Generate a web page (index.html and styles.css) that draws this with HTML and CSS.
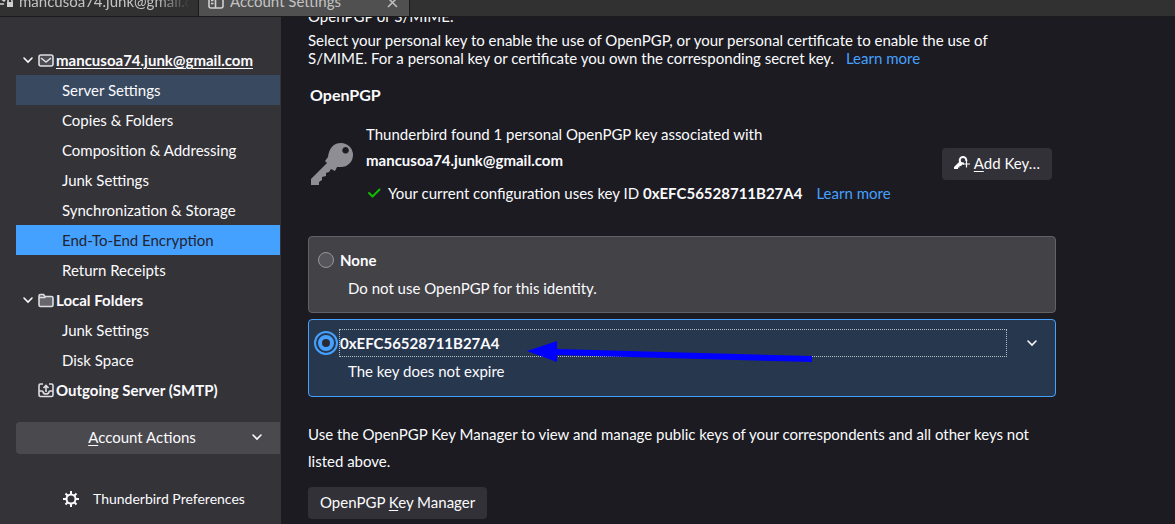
FILE: index.html
```html
<!DOCTYPE html>
<html lang="en">
<head>
<meta charset="utf-8">
<title>Account Settings</title>
<link rel="stylesheet" href="styles.css">
</head>
<body>
<header class="tabs">
  <div class="tab tab-mail">
    <svg class="tab-icon" width="16" height="16" viewBox="0 0 16 16" fill="none" stroke="#d0d0d0" stroke-width="1.6"><path d="M0 11h4M0 5l4 3 5-6M10.500 0v5"/><path d="M8 10V8a2 2 0 0 1 4 0v2"/><path d="M7 9h6v5H7z" fill="#d0d0d0" stroke="none"/></svg>
    <span class="tab-title faded">mancusoa74.junk@gmail.com</span>
  </div>
  <div class="tab tab-active">
    <svg class="tab-icon" width="16" height="16" viewBox="0 0 16 16" fill="none" stroke="#d0d0d0" stroke-width="1.6"><rect x="1" y="1" width="14" height="14" rx="2"/><path d="M7.500 1v14M3 7.500h2.500M3 10.500h2.500" /></svg>
    <span class="tab-title">Account Settings</span>
    <button class="tab-close" aria-label="Close tab"><svg width="12" height="12" viewBox="0 0 12 12" stroke="#bdbdbd" stroke-width="1.6"><path d="M1 1l9 9M10 1l-9 9"/></svg></button>
  </div>
</header>
<div class="layout">
  <nav class="sidebar">
    <ul class="tree">
      <li><a class="row account" href="#"><svg class="twisty" width="12" height="12" viewBox="0 0 12 12"><path d="M2 4l4 4 4-4"/></svg><svg class="icon" width="16" height="16" viewBox="0 0 16 16"><rect x="1" y="3" width="14" height="11" rx="2" fill="#4d4c53"/><path d="M3 6l5 4 5-4"/></svg><span class="underlined">mancusoa74.junk@gmail.com</span></a></li>
      <li><a class="row child hovered" href="#">Server Settings</a></li>
      <li><a class="row child" href="#">Copies &amp; Folders</a></li>
      <li><a class="row child" href="#">Composition &amp; Addressing</a></li>
      <li><a class="row child" href="#">Junk Settings</a></li>
      <li><a class="row child" href="#">Synchronization &amp; Storage</a></li>
      <li><a class="row child selected" href="#">End-To-End Encryption</a></li>
      <li><a class="row child" href="#">Return Receipts</a></li>
      <li><a class="row account" href="#"><svg class="twisty" width="12" height="12" viewBox="0 0 12 12"><path d="M2 4l4 4 4-4"/></svg><svg class="icon" width="16" height="16" viewBox="0 0 16 16"><path d="M1 5V4q0-1.500 1.500-1.500h3L7 4.500h6.500Q15 4.500 15 6v7Q15 14.500 13.500 14.500h-11Q1 14.500 1 13zM1 5.500h6.500" fill="#67666c"/></svg><span>Local Folders</span></a></li>
      <li><a class="row child" href="#">Junk Settings</a></li>
      <li><a class="row child" href="#">Disk Space</a></li>
      <li><a class="row account" href="#"><span class="twisty"></span><svg class="icon" width="16" height="16" viewBox="0 0 16 16"><path d="M5 2H2.500Q1 2 1 3.500v9.500Q1 14.500 2.500 14.500h11Q15 14.500 15 13V3.500Q15 2 13.500 2H11M8 10V4M5.500 6L8 3.500 10.500 6M1.500 9h2.500q1 0 1 1 .5 2 3 2t3-2q0-1 1-1h2.500"/></svg><span>Outgoing Server (SMTP)</span></a></li>
    </ul>
    <button class="actions"><span class="actions-label"><u>A</u>ccount Actions</span><svg class="twisty" width="12" height="12" viewBox="0 0 12 12"><path d="M2 4l4 4 4-4"/></svg></button>
    <a class="prefs" href="#"><svg width="16" height="16" viewBox="0 0 16 16" fill="none" stroke="#fbfbfe"><circle cx="8" cy="8" r="4.500" stroke-width="2"/><path stroke-width="2" d="M8 0v3M8 13v3M0 8h3M13 8h3M2.500 2.500l2 2M11.500 11.500l2 2M13.500 2.500l-2 2M4.500 11.500l-2 2"/></svg><span>Thunderbird Preferences</span></a>
  </nav>
  <main class="content">
    <p class="intro clipped">OpenPGP or S/MIME.</p>
    <p class="intro">Select your personal key to enable the use of OpenPGP, or your personal certificate to enable the use of<br>S/MIME. For a personal key or certificate you own the corresponding secret key. <a class="link" href="#">Learn more</a></p>
    <h2 class="heading">OpenPGP</h2>
    <section class="status">
      <svg class="key" width="44" height="44" viewBox="0 0 44 44"><path fill="#8f8e94" fill-rule="evenodd" d="M31 1a12 12 0 0 1 0 24q-2 0-4 0l-2 4-4-2-2 3-3 1v3l-4 1v3l-3 2v3H1v-6l16-16-2-2 3-4C19 7 23 1 31 1zM35.500 5a3.300 3.300 0 1 0 .1 0z"/></svg>
      <div class="status-text">
        <p class="found">Thunderbird found 1 personal OpenPGP key associated with<br><strong>mancusoa74.junk@gmail.com</strong></p>
        <p class="current"><svg width="16" height="16" viewBox="0 0 16 16" fill="none" stroke="#12bc00" stroke-width="2" stroke-linecap="round" stroke-linejoin="round"><path d="M3 8l3.500 3.500L13.500 4.500"/></svg><span>Your current configuration uses key ID <strong>0xEFC56528711B27A4</strong></span><a class="link" href="#">Learn more</a></p>
      </div>
      <button class="button add"><svg width="16" height="16" viewBox="0 0 16 16" fill="none" stroke="#fbfbfe"><path stroke-width="2" d="M10 8.500H9a3.300 3.300 0 1 1 3.300-3.300V6"/><path fill="#fbfbfe" stroke="none" d="M5.500 6.500L8.500 9.500 7 11H5.500v1.500H4V14H0v-2z"/><path stroke-width="1.200" d="M12.500 5.500v7M9 9h7"/></svg><span><u>A</u>dd Key…</span></button>
    </section>
    <div class="cards">
      <div class="card">
        <div class="option"><input class="radio" type="radio" name="key" id="none"><label class="option-label" for="none">None</label></div>
        <p class="detail">Do not use OpenPGP for this identity.</p>
      </div>
      <div class="card card-selected">
        <div class="option"><input class="radio" type="radio" name="key" id="key1" checked><label class="option-label focused" for="key1">0xEFC56528711B27A4</label><button class="expand" aria-label="Show key details"><svg class="twisty" width="12" height="12" viewBox="0 0 12 12"><path d="M2 4l4 4 4-4"/></svg></button></div>
        <p class="detail">The key does not expire</p>
        <svg class="arrow" width="286" height="24" viewBox="0 0 286 24" fill="#0000ff"><path d="M0 11L30 1v8l255 7v6L30 15v7z"/></svg>
      </div>
    </div>
    <p class="manage">Use the OpenPGP Key Manager to view and manage public keys of your correspondents and all other keys not listed above.</p>
    <button class="button"><span>OpenPGP <u>K</u>ey Manager</span></button>
  </main>
</div>
</body>
</html>
```
FILE: styles.css
```css
* { box-sizing: border-box; }
body {
  margin: 0;
  height: 100vh;
  display: flex;
  flex-direction: column;
  overflow: hidden;
  background: #1c1b22;
  color: #fbfbfe;
  font: 15px/18px Lato, "Open Sans", sans-serif;
}
p, h2, ul { margin: 0; padding: 0; }
ul { list-style: none; }
a { color: inherit; text-decoration: none; }
button { font: inherit; color: inherit; border: 0; padding: 0; background: none; }
svg { flex: none; }
u { text-underline-offset: 2px; }

.tabs {
  display: flex;
  align-items: flex-end;
  flex: none;
  height: 17px;
  overflow: hidden;
  background: #313131;
  border-bottom: 1px solid #1b1b1b;
  color: #c4c4c4;
}
.tab { display: flex; align-items: center; height: 30px; flex: none; }
.tab-mail { width: 198px; gap: 3px; padding-right: 8px; }
.tab-active { width: 212px; gap: 6px; padding: 0 10px 0 9px; background: #505050; border: solid #1b1b1b; border-width: 0 1px; }
.tab-title { flex: 1; white-space: nowrap; overflow: hidden; }
.faded { mask-image: linear-gradient(to right, #000 80%, transparent); }
.tab-close { display: flex; margin-top: 4px; }

.layout { flex: 1; display: flex; min-height: 0; }
.sidebar {
  flex: none;
  width: 281px;
  padding: 28px 1px 0 16px;
  background: #343338;
}
.row { display: flex; align-items: center; height: 30px; white-space: nowrap; }
.child { padding-left: 46px; }
.account { padding-left: 6px; font-weight: bold; }
.hovered { background: #39495f; }
.selected { background: #45a1ff; color: #23232f; }
.twisty { width: 12px; height: 12px; flex: none; fill: none; stroke: #fbfbfe; stroke-width: 1.600; stroke-linecap: round; }
.icon { margin: 0 2px 0 4px; fill: none; stroke: #dedee2; stroke-width: 1.600; }
.underlined { text-decoration: underline; text-underline-offset: 2px; }
.actions {
  display: flex;
  align-items: center;
  width: 100%;
  height: 32px;
  margin-top: 17px;
  padding: 0 17px 2px;
  border-radius: 4px 0 0 4px;
  background: #4a494e;
}
.actions-label { flex: 1; }
.prefs { display: flex; align-items: center; gap: 14px; margin-top: 36px; padding-left: 47px; font-size: 14px; }

.content { flex: 1; min-width: 0; max-width: 775px; padding: 0 0 0 27px; overflow: hidden; }
.intro { line-height: 18px; padding-right: 16px; }
.clipped { margin: -10px 0 6px; }
.link { color: #45a1ff; margin-left: 8px; }
.heading { margin: 19px 2px 17px; font-size: 16px; line-height: 18px; }
.status { display: flex; padding-right: 4px; }
.key { margin: 21px 12px 0 2px; }
.status-text { flex: 1; line-height: 26px; white-space: nowrap; }
.current { display: flex; align-items: center; gap: 6px; margin-top: 7px; }
.button {
  display: flex;
  align-items: center;
  gap: 4px;
  height: 32px;
  padding: 0 12px 2px;
  border-radius: 4px;
  background: #323137;
  white-space: nowrap;
}
.add { margin-top: 27px; }
.cards { display: flex; flex-direction: column; gap: 6px; margin-top: 30px; }
.card {
  position: relative;
  padding: 9px 9px 10px;
  border: 1px solid #626167;
  border-radius: 4px;
  background: #434247;
}
.card-selected { border-color: #45a1ff; background: #26374e; padding-bottom: 11px; }
.option { display: flex; align-items: center; }
.option-label { flex: 1; margin-left: 5px; padding-left: 1px; line-height: 28px; font-weight: bold; }
.focused { outline: 1px dotted #b5bcc6; outline-offset: -1px; }
.radio {
  appearance: none;
  flex: none;
  width: 16px;
  height: 16px;
  margin: 0;
  border: 1px solid #97969c;
  border-radius: 50%;
  background: #56555b;
}
.radio:checked {
  border: 4px solid #45a1ff;
  background: #2b2a33;
  outline: 2px solid #45a1ff;
  outline-offset: 2px;
}
.expand { display: flex; margin: 0 8px 0 19px; }
.detail { margin-left: 30px; line-height: 28px; }
.arrow { position: absolute; left: 218px; top: 20px; }
.manage { margin: 24px 0 12px; line-height: 27px; }
```
